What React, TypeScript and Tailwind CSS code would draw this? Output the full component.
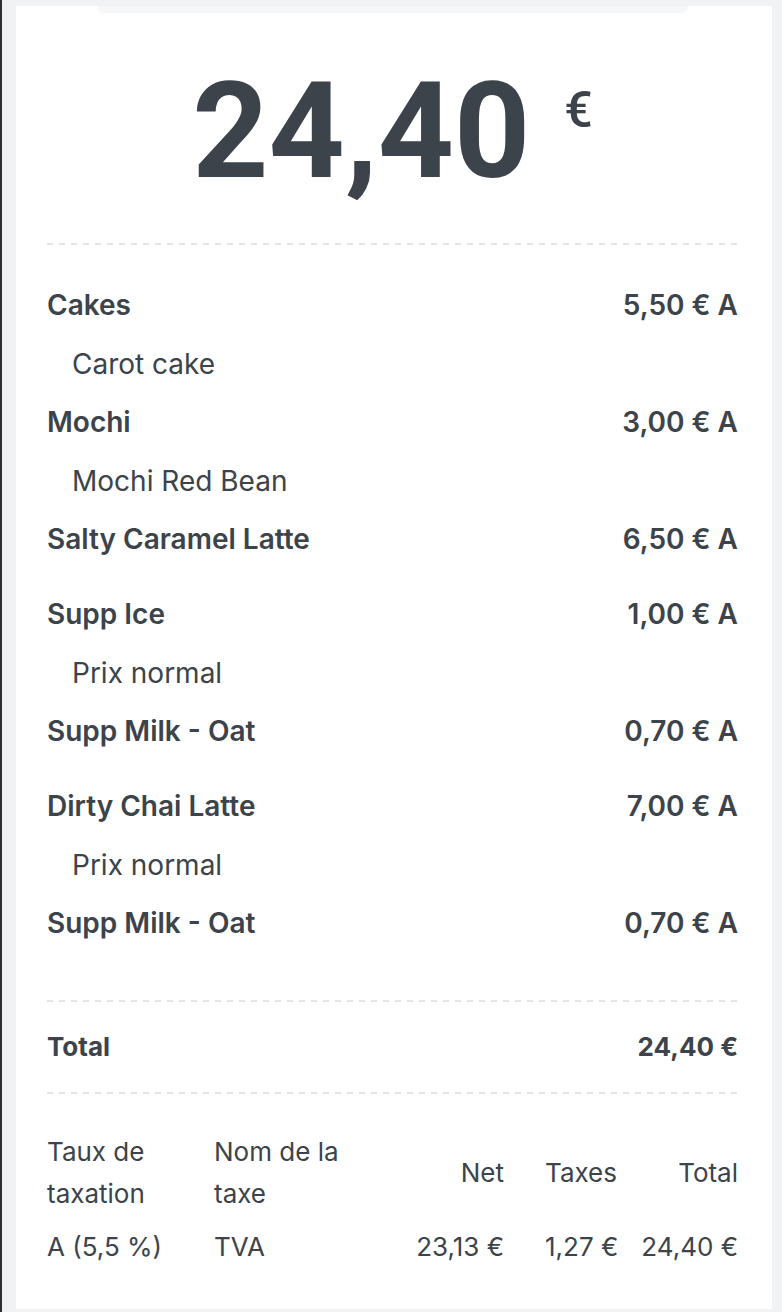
const lines: { name: string; price?: string; sub?: boolean; gap?: boolean }[] = [
  { name: "Cakes", price: "5,50 € A" },
  { name: "Carot cake", sub: true },
  { name: "Mochi", price: "3,00 € A" },
  { name: "Mochi Red Bean", sub: true },
  { name: "Salty Caramel Latte", price: "6,50 € A" },
  { name: "Supp Ice", price: "1,00 € A", gap: true },
  { name: "Prix normal", sub: true },
  { name: "Supp Milk - Oat", price: "0,70 € A" },
  { name: "Dirty Chai Latte", price: "7,00 € A", gap: true },
  { name: "Prix normal", sub: true },
  { name: "Supp Milk - Oat", price: "0,70 € A" },
];

function Dashed() {
  return (
    <div className="h-[2px] w-full bg-[repeating-linear-gradient(to_right,#e3e4e6_0px,#e3e4e6_6px,transparent_6px,transparent_12px)]" />
  );
}

export default function App() {
  return (
    <div className="flex min-h-[1312px] bg-[#f1f2f4] font-['Inter',sans-serif] text-[#3c434a]">
      <div className="w-[2px] shrink-0 bg-[#2f2f2f]" />
      <div className="w-[14px] shrink-0" />
      <div className="mt-[6px] mb-[3px] flex w-[756px] flex-col bg-white pl-[31px] pr-[34px]">
        <div className="mx-[50px] h-[7px] rounded-b-[8px] bg-[#f6f7f8]" />

        {/* big amount */}
        <div className="flex justify-center pt-[52px] pb-[45px]">
          <div className="flex items-start font-['Roboto',sans-serif]">
            <span className="text-[133px] font-bold leading-[133px]">24,40</span>
            <span className="ml-[34px] mt-[20px] text-[50px] font-medium leading-[50px]">€</span>
          </div>
        </div>

        <Dashed />

        <div className="pt-[31px] pb-[47px]">
          {lines.map((l, i) => (
            <div
              key={i}
              className={`flex h-[58.5px] items-center justify-between text-[28px] ${l.gap ? "mt-[16.5px]" : ""}`}
            >
              <span className={l.sub ? "pl-[25px] font-normal" : "font-semibold"}>{l.name}</span>
              {l.price && <span className="font-semibold">{l.price}</span>}
            </div>
          ))}
        </div>

        <Dashed />

        <div className="flex h-[90px] items-center justify-between text-[26px] font-bold">
          <span>Total</span>
          <span>24,40 €</span>
        </div>

        <Dashed />

        {/* tax table */}
        <div className="pt-[37px] text-[26px] leading-[42px] whitespace-nowrap">
          <div className="flex items-center">
            <div className="w-[167px]">
              Taux de
              <br />
              taxation
            </div>
            <div className="w-[150px]">
              Nom de la
              <br />
              taxe
            </div>
            <div className="w-[140px] text-right">Net</div>
            <div className="ml-[41px] w-[80px]">Taxes</div>
            <div className="flex-1 text-right">Total</div>
          </div>
          <div className="mt-[11px] flex items-center">
            <div className="w-[167px]">A (5,5 %)</div>
            <div className="w-[150px]">TVA</div>
            <div className="w-[140px] text-right">23,13 €</div>
            <div className="ml-[41px] w-[80px]">1,27 €</div>
            <div className="flex-1 text-right">24,40 €</div>
          </div>
        </div>
      </div>
    </div>
  );
}
